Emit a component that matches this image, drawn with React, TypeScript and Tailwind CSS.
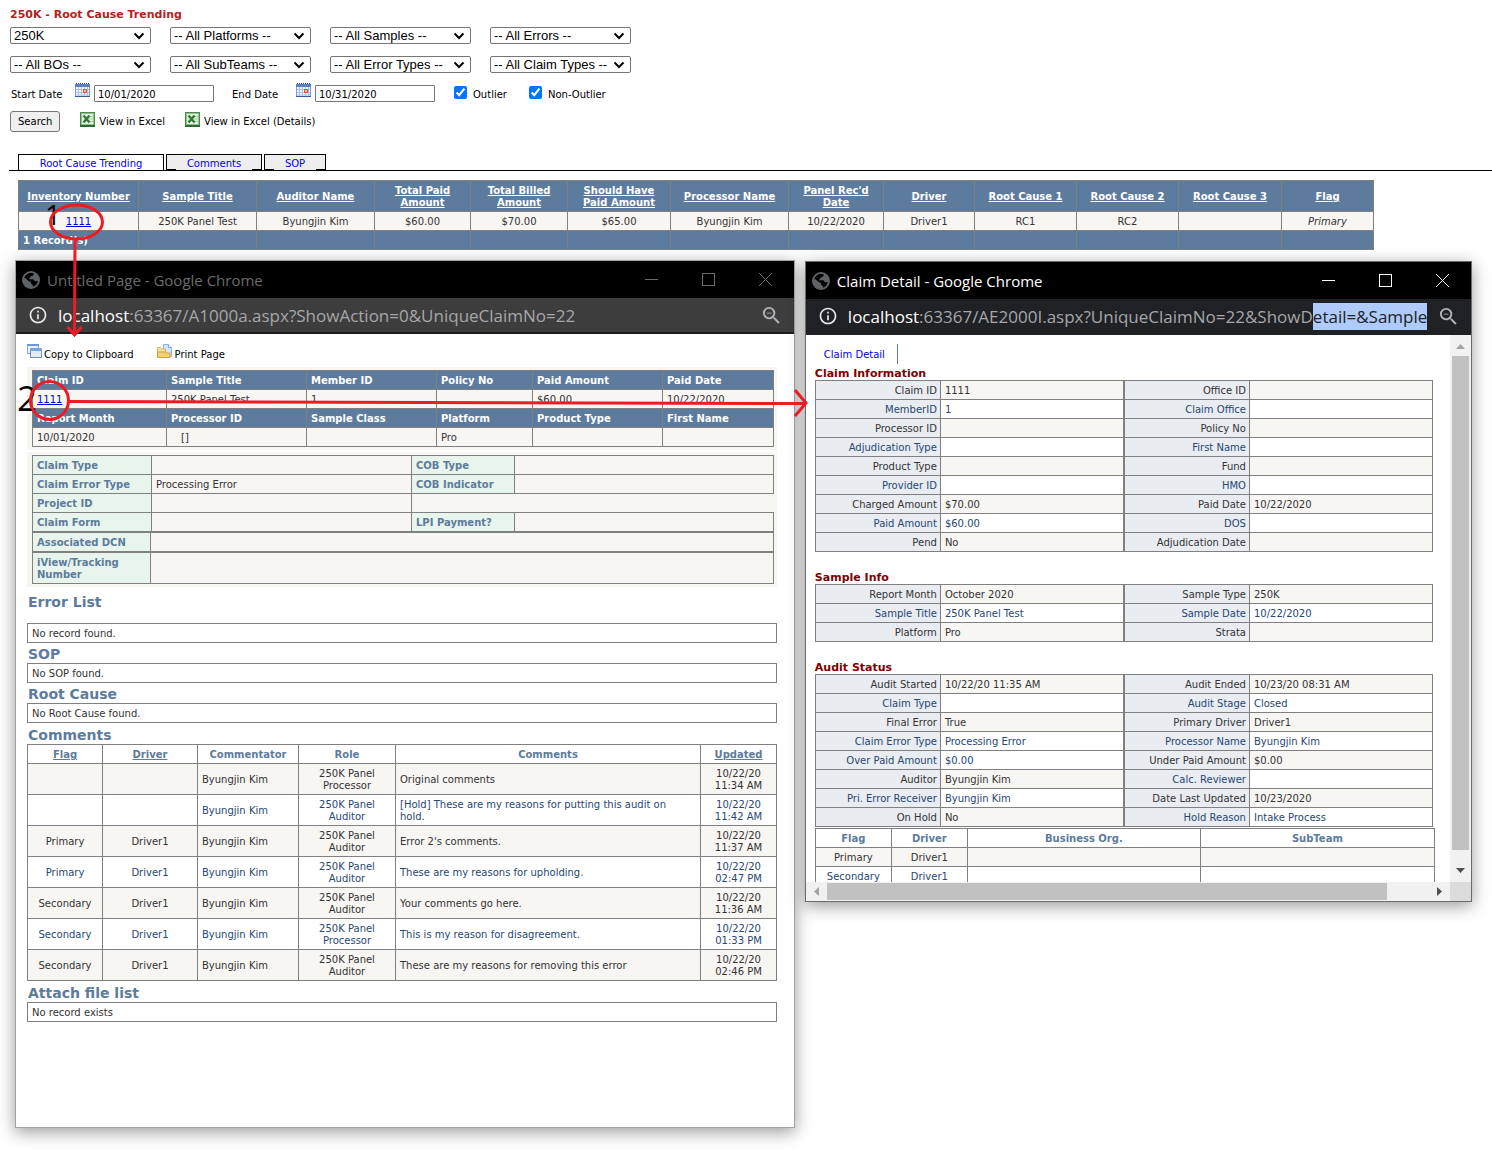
import React from "react";
import { MdInfoOutline, MdZoomOut } from "react-icons/md";

const filterRows = [
  ["250K", "-- All Platforms --", "-- All Samples --", "-- All Errors --"],
  ["-- All BOs --", "-- All SubTeams --", "-- All Error Types --", "-- All Claim Types --"],
];
const filterNames = [
  ["Audit", "Platform", "Sample", "Error"],
  ["Business org", "Sub team", "Error type", "Claim type"],
];

const trendingColumns = [
  { label: "Inventory Number", width: "w-[120px]" },
  { label: "Sample Title", width: "w-[118px]" },
  { label: "Auditor Name", width: "w-[118px]" },
  { label: "Total Paid Amount", width: "w-[96px]" },
  { label: "Total Billed Amount", width: "w-[97px]" },
  { label: "Should Have Paid Amount", width: "w-[103px]" },
  { label: "Processor Name", width: "w-[118px]" },
  { label: "Panel Rec'd Date", width: "w-[95px]" },
  { label: "Driver", width: "w-[91px]" },
  { label: "Root Cause 1", width: "w-[102px]" },
  { label: "Root Cause 2", width: "w-[102px]" },
  { label: "Root Cause 3", width: "w-[103px]" },
  { label: "Flag", width: "w-[92px]" },
];
const trendingRow = ["250K Panel Test", "Byungjin Kim", "$60.00", "$70.00", "$65.00", "Byungjin Kim", "10/22/2020", "Driver1", "RC1", "RC2", ""];

const comments = [
  ["", "", "250K Panel Processor", "Original comments", "10/22/20 11:34 AM"],
  ["", "", "250K Panel Auditor", "[Hold] These are my reasons for putting this audit on hold.", "10/22/20 11:42 AM"],
  ["Primary", "Driver1", "250K Panel Auditor", "Error 2's comments.", "10/22/20 11:37 AM"],
  ["Primary", "Driver1", "250K Panel Auditor", "These are my reasons for upholding.", "10/22/20 02:47 PM"],
  ["Secondary", "Driver1", "250K Panel Auditor", "Your comments go here.", "10/22/20 11:36 AM"],
  ["Secondary", "Driver1", "250K Panel Processor", "This is my reason for disagreement.", "10/22/20 01:33 PM"],
  ["Secondary", "Driver1", "250K Panel Auditor", "These are my reasons for removing this error", "10/22/20 02:46 PM"],
];

type Field = [label: string, value: string, plain?: boolean];

const claimLeft: Field[] = [
  ["Claim ID", "1111"],
  ["MemberID", "1", true],
  ["Processor ID", ""],
  ["Adjudication Type", "", true],
  ["Product Type", ""],
  ["Provider ID", "", true],
  ["Charged Amount", "$70.00"],
  ["Paid Amount", "$60.00", true],
  ["Pend", "No"],
];
const claimRight: Field[] = [
  ["Office ID", ""],
  ["Claim Office", "", true],
  ["Policy No", ""],
  ["First Name", "", true],
  ["Fund", ""],
  ["HMO", "", true],
  ["Paid Date", "10/22/2020"],
  ["DOS", "", true],
  ["Adjudication Date", ""],
];
const sampleLeft: Field[] = [
  ["Report Month", "October 2020"],
  ["Sample Title", "250K Panel Test", true],
  ["Platform", "Pro"],
];
const sampleRight: Field[] = [
  ["Sample Type", "250K"],
  ["Sample Date", "10/22/2020", true],
  ["Strata", ""],
];
const auditLeft: Field[] = [
  ["Audit Started", "10/22/20 11:35 AM"],
  ["Claim Type", "", true],
  ["Final Error", "True"],
  ["Claim Error Type", "Processing Error", true],
  ["Over Paid Amount", "$0.00", true],
  ["Auditor", "Byungjin Kim"],
  ["Pri. Error Receiver", "Byungjin Kim", true],
  ["On Hold", "No"],
];
const auditRight: Field[] = [
  ["Audit Ended", "10/23/20 08:31 AM"],
  ["Audit Stage", "Closed", true],
  ["Primary Driver", "Driver1"],
  ["Processor Name", "Byungjin Kim", true],
  ["Under Paid Amount", "$0.00"],
  ["Calc. Reviewer", "", true],
  ["Date Last Updated", "10/23/2020"],
  ["Hold Reason", "Intake Process", true],
];

const CalendarIcon = () => (
  <svg className="w-[15px] h-[15px] shrink-0" viewBox="0 0 15 15" aria-hidden="true">
    <rect x="0.5" y="2.5" width="14" height="11" fill="#f4f8ff" stroke="#7f9bd6" />
    <rect x="0" y="1" width="15" height="3" fill="#5b7fc4" />
    <path d="M1 .5h14" stroke="#444" strokeDasharray="1 1" />
    <path d="M3.5 4v9M6.5 4v9M9.5 4v9M12.5 4v9M1 6.5h13M1 9.5h13M1 12h13" stroke="#a9bfe8" />
    <rect x="8" y="6" width="4" height="4" fill="#e2502c" />
    <rect x="9" y="7" width="2" height="2" fill="#f6b9a6" />
    <path d="M0 13.5h15" stroke="#3c5b9c" />
  </svg>
);

const ExcelIcon = () => (
  <svg className="w-[15px] h-[15px] shrink-0" viewBox="0 0 15 15" aria-hidden="true">
    <rect width="15" height="15" fill="#4d8a50" />
    <rect y="13" width="15" height="2" fill="#2c6a32" />
    <rect x="1" y="1" width="13" height="12" fill="#8fc08a" />
    <rect x="2" y="2" width="11" height="10" fill="#e6f3e3" />
    <path d="M9 4.500h4M9 7h4M9 9.500h4" stroke="#a8cfa4" />
    <path d="M3.500 3.500l6 7M9.500 3.500l-6 7" stroke="#2f7a35" strokeWidth="2.400" />
  </svg>
);

const CopyIcon = () => (
  <svg className="w-[15px] h-[15px] shrink-0" viewBox="0 0 15 15" aria-hidden="true">
    <rect x="0.5" y="0.5" width="11" height="9" fill="#eaf2fc" stroke="#86a6da" />
    <rect x="0" y="0" width="12" height="2" fill="#6f97d6" />
    <rect x="3.500" y="4.500" width="11" height="9" fill="#e3edfa" stroke="#6d8fcb" />
    <rect x="3" y="4" width="12" height="3" fill="#7ba3de" />
  </svg>
);

const PrintIcon = () => (
  <svg className="w-[15px] h-[15px] shrink-0" viewBox="0 0 15 15" aria-hidden="true">
    <path d="M6.500 .5h5l3 3v9h-8z" fill="#d3e5fa" stroke="#8fb2e2" />
    <path d="M11.500 .5v3h3" fill="#fff" stroke="#7ea6dc" />
    <path d="M.5 3.500h3l1 1.500h4v8.500h-8z" fill="#f6e3a4" stroke="#d9b455" />
    <path d="M.5 13.500v-5.500h8l1 1h3.500v4.500z" fill="#f5d06e" stroke="#d2a23c" />
  </svg>
);

const GlobeIcon = () => (
  <svg className="mr-[7px] size-[18px] shrink-0" viewBox="0 0 18 18" aria-hidden="true">
    <circle cx="9" cy="9" r="9" fill="#5f6368" />
    <path d="M4.500 3.500C6 2 8.500 1.500 11.500 2.200c.8 1.600-.4 2.600-1.900 2.900-.9.200-.7 1.400-1.700 1.700-.9.300-1 1.300 0 1.500h3.100c1.200.1 1 1.700 2.200 1.900 1.100.1 2-.3 2.600-.1-.3 3-2.600 5.300-5 5.700.2-1.300.3-2-.8-2.300-1.200-.3-1.100-1.800-1-2.700-1.400-.2-2.600-.8-3.500-1.900C4.400 7.700 3.400 7 2.200 6.900 2.600 5.500 3.400 4.400 4.500 3.500z" fill="#000" />
  </svg>
);

function FilterSelect({ name, value }: { name: string; value: string }) {
  return (
    <div className="relative w-[141px]">
      <select
        aria-label={name}
        defaultValue={value}
        className="block w-full h-[17px] appearance-none rounded-[2px] border border-[#767676] bg-white pl-[3px] pr-4 text-[13px] leading-[15px] text-black font-['Liberation_Sans',Arial,sans-serif]"
      >
        <option>{value}</option>
      </select>
      <svg className="absolute right-[6px] top-[5px] w-[12px] h-[8px] pointer-events-none" viewBox="0 0 12 8" aria-hidden="true">
        <path d="M1.500 1.500L6 6l4.500-4.500" fill="none" stroke="#000" strokeWidth="2" />
      </svg>
    </div>
  );
}

function DateField({ id, label, value }: { id: string; label: string; value: string }) {
  return (
    <div className="flex items-center">
      <label htmlFor={id} className="w-16 pt-[2px]">{label}</label>
      <button type="button" aria-label={`Pick ${label}`} className="mb-[6px] mr-1">
        <CalendarIcon />
      </button>
      <input id={id} type="text" defaultValue={value} className="w-[120px] h-[17px] rounded-[1px] border border-[#767676] px-[3px] pt-px" />
    </div>
  );
}

function ChromeWindow({ title, active, url, className, children }: any) {
  return (
    <section className={`flex min-w-0 flex-col border bg-white shadow-[0_4px_16px_rgba(0,0,0,0.4)] ${className}`}>
      <header
        className={`flex h-[37px] shrink-0 items-center bg-black pl-[6px] text-[15px] leading-6 font-['Open_Sans','Noto_Sans',sans-serif] ${active ? "text-white" : "text-[#6b6b6b]"}`}
      >
        <GlobeIcon />
        <h2 className="flex-1 truncate">{title}</h2>
        <button type="button" aria-label="Minimize" className="flex h-full w-[57px] items-center justify-center">
          <svg className="size-[13px]" viewBox="0 0 13 13"><path d="M0 6.500h13" stroke="currentColor" /></svg>
        </button>
        <button type="button" aria-label="Maximize" className="flex h-full w-[57px] items-center justify-center">
          <svg className="size-[13px]" viewBox="0 0 13 13"><rect x="0.5" y="0.5" width="12" height="12" fill="none" stroke="currentColor" /></svg>
        </button>
        <button type="button" aria-label="Close" className="flex h-full w-[57px] items-center justify-center">
          <svg className="size-[13px]" viewBox="0 0 13 13"><path d="M0 0l13 13M13 0L0 13" stroke="currentColor" /></svg>
        </button>
      </header>
      <div
        className={`flex h-9 shrink-0 items-center border-b-2 pl-3 pr-[11px] text-[17px] leading-[27px] text-[#a5a7aa] font-['Open_Sans','Noto_Sans',sans-serif] ${active ? "bg-[#202124] border-[#202124]" : "bg-[#3d3d3d] border-[#1d1d1d]"}`}
      >
        <MdInfoOutline className="mr-[10px] size-5 shrink-0 text-[#e8eaed]" />
        <div className="min-w-0 flex-1 overflow-hidden whitespace-nowrap">{url}</div>
        <button type="button" aria-label="Zoom" className="ml-2 shrink-0 text-[#b0b3b8]">
          <MdZoomOut className="size-[23px]" />
        </button>
      </div>
      {children}
    </section>
  );
}

const grid = "w-full table-fixed border-collapse [&_td]:border [&_td]:border-[#808080] [&_td]:pt-1 [&_td]:pb-[2px] [&_th]:border [&_th]:border-[#808080] [&_th]:pt-1 [&_th]:pb-[2px]";

function TrendingTable() {
  return (
    <table className={`${grid} text-center text-[#333333]`}>
      <thead className="bg-[#5d7b9d] text-white">
        <tr>
          {trendingColumns.map((c) => (
            <th key={c.label} className={`${c.width} px-1`}>
              <a href="#" className="underline">{c.label}</a>
            </th>
          ))}
        </tr>
      </thead>
      <tbody>
        <tr className="bg-[#f7f6f3]">
          <td><a href="#" className="text-[#0000ee] underline">1111</a></td>
          {trendingRow.map((v, i) => <td key={i}>{v}</td>)}
          <td className="italic">Primary</td>
        </tr>
      </tbody>
      <tfoot className="bg-[#5d7b9d] text-left font-bold text-white">
        <tr>
          <td className="pl-1 whitespace-nowrap">1 Record(s)</td>
          {trendingColumns.slice(1).map((c) => <td key={c.label}></td>)}
        </tr>
      </tfoot>
    </table>
  );
}

function ClaimSummary() {
  return (
    <div className="bg-[#f7f6f3] pl-[5px] pr-[3px] py-[3px]">
      <table className={`${grid} text-left text-[#333333] [&_td]:px-1 [&_td]:h-[19px] [&_th]:px-1 [&_th]:bg-[#5d7b9d] [&_th]:text-white`}>
        <tbody>
          <tr>
            <th className="w-[134px]">Claim ID</th>
            <th className="w-[140px]">Sample Title</th>
            <th className="w-[130px]">Member ID</th>
            <th className="w-[96px]">Policy No</th>
            <th className="w-[130px]">Paid Amount</th>
            <th className="w-[111px]">Paid Date</th>
          </tr>
          <tr>
            <td><a href="#" className="text-[#0000ee] underline">1111</a></td>
            <td>250K Panel Test</td>
            <td>1</td>
            <td></td>
            <td>$60.00</td>
            <td>10/22/2020</td>
          </tr>
          <tr>
            <th>Report Month</th>
            <th>Processor ID</th>
            <th>Sample Class</th>
            <th>Platform</th>
            <th>Product Type</th>
            <th>First Name</th>
          </tr>
          <tr>
            <td>10/01/2020</td>
            <td><span className="pl-[10px]">[]</span></td>
            <td></td>
            <td>Pro</td>
            <td></td>
            <td></td>
          </tr>
        </tbody>
      </table>
    </div>
  );
}

function ClaimTypes() {
  const labels = "[&_th]:bg-[#e8f5ec] [&_th]:px-1 [&_th]:text-left [&_th]:text-[#5d7b9d] [&_td]:px-1";
  return (
    <div className="mt-[2px] bg-[#f7f6f3] pl-[5px] pr-[3px] py-[3px] text-[#333333]">
      <table className={`${grid} ${labels}`}>
        <tbody>
          <tr>
            <th className="w-[119px]">Claim Type</th>
            <td className="w-[260px]"></td>
            <th className="w-[103px]">COB Type</th>
            <td className="w-[259px]"></td>
          </tr>
          <tr>
            <th>Claim Error Type</th>
            <td>Processing Error</td>
            <th>COB Indicator</th>
            <td></td>
          </tr>
          <tr>
            <th>Project ID</th>
            <td></td>
          </tr>
          <tr>
            <th>Claim Form</th>
            <td></td>
            <th>LPI Payment?</th>
            <td></td>
          </tr>
        </tbody>
      </table>
      <table className={`${grid} ${labels}`}>
        <tbody>
          <tr>
            <th className="w-[118px]">Associated DCN</th>
            <td></td>
          </tr>
        </tbody>
      </table>
      <table className={`${grid} ${labels}`}>
        <tbody>
          <tr>
            <th className="w-[118px]">iView/Tracking Number</th>
            <td></td>
          </tr>
        </tbody>
      </table>
    </div>
  );
}

const SectionTitle = ({ children }: any) => (
  <h3 className="h-5 pl-px text-[14px] leading-[22px] font-bold text-[#5d7b9d]">{children}</h3>
);

const EmptyBox = ({ children }: any) => (
  <p className="border border-[#808080] bg-white pt-1 pb-[2px] px-1 text-[#333333]">{children}</p>
);

function CommentsTable() {
  return (
    <table className={`${grid} text-center [&_td]:px-1 [&_th]:px-1`}>
      <thead className="text-[#5d7b9d]">
        <tr>
          <th className="w-[75px]"><a href="#" className="underline">Flag</a></th>
          <th className="w-[95px]"><a href="#" className="underline">Driver</a></th>
          <th className="w-[101px]">Commentator</th>
          <th className="w-[97px]">Role</th>
          <th className="w-[305px]">Comments</th>
          <th className="w-[76px]"><a href="#" className="underline">Updated</a></th>
        </tr>
      </thead>
      <tbody>
        {comments.map(([flag, driver, role, text, updated], i) => (
          <tr key={i} className={i % 2 ? "bg-white text-[#284775]" : "bg-[#f7f6f3] text-[#333333]"}>
            <td>{flag}</td>
            <td>{driver}</td>
            <td className="text-left">Byungjin Kim</td>
            <td>{role}</td>
            <td className="text-left"><p className="pr-3">{text}</p></td>
            <td>{updated}</td>
          </tr>
        ))}
      </tbody>
    </table>
  );
}

function FieldTable({ fields }: { fields: Field[] }) {
  return (
    <table className={`${grid} flex-1 [&_td]:h-[19px]`}>
      <tbody>
        {fields.map(([label, value, plain]) => (
          <tr key={label} className={plain ? "bg-white text-[#284775]" : "bg-[#f7f6f3] text-[#333333]"}>
            <th className="w-[125px] bg-[#e9ecf1] pr-[3px] text-right font-normal">{label}</th>
            <td className="w-[183px] px-1">{value}</td>
          </tr>
        ))}
      </tbody>
    </table>
  );
}

function DetailSection({ title, left, right }: { title: string; left: Field[]; right: Field[] }) {
  return (
    <section>
      <h3 className="h-[14px] text-[11px] leading-4 font-bold text-[#800000]">{title}</h3>
      <div className="flex">
        <FieldTable fields={left} />
        <FieldTable fields={right} />
      </div>
    </section>
  );
}

function ClaimDetailBody() {
  return (
    <div className="grid grid-cols-[1fr_21px] grid-rows-[547px_19px]">
      <div className="overflow-hidden pl-[9px] pr-[17px] pt-[9px]">
        <nav className="mb-[2px] inline-flex h-5 items-center border-r border-[#5d7b9d] pl-[9px] pr-3 pt-[2px]">
          <a href="#" className="text-[#0000ee]">Claim Detail</a>
        </nav>
        <div className="flex flex-col gap-[18px]">
          <DetailSection title="Claim Information" left={claimLeft} right={claimRight} />
          <DetailSection title="Sample Info" left={sampleLeft} right={sampleRight} />
          <DetailSection title="Audit Status" left={auditLeft} right={auditRight} />
        </div>
        <table className={`${grid} mt-px text-center`}>
          <thead className="text-[#5d7b9d]">
            <tr>
              <th className="w-[76px]">Flag</th>
              <th className="w-[76px]">Driver</th>
              <th className="w-[233px]">Business Org.</th>
              <th className="w-[234px]">SubTeam</th>
            </tr>
          </thead>
          <tbody>
            <tr className="bg-[#f7f6f3] text-[#333333]">
              <td>Primary</td><td>Driver1</td><td></td><td></td>
            </tr>
            <tr className="text-[#284775]">
              <td>Secondary</td><td>Driver1</td><td></td><td></td>
            </tr>
          </tbody>
        </table>
      </div>
      <div className="flex flex-col items-center bg-[#f1f1f1] px-[2px]">
        <svg className="h-[21px] w-[9px] shrink-0" viewBox="0 0 9 21"><path d="M0 14h9L4.500 9z" fill="#a3a3a3" /></svg>
        <div className="w-full flex-1 bg-[#c1c1c1]"></div>
        <svg className="h-8 w-[9px] shrink-0" viewBox="0 0 9 32"><path d="M0 18h9l-4.500 5z" fill="#505050" /></svg>
      </div>
      <div className="flex items-center bg-[#f1f1f1] py-px">
        <svg className="h-[9px] w-[21px] shrink-0" viewBox="0 0 21 9"><path d="M13 0v9L8 4.500z" fill="#a3a3a3" /></svg>
        <div className="h-full flex-1 bg-[#c1c1c1]"></div>
        <svg className="h-[9px] w-[63px] shrink-0" viewBox="0 0 63 9"><path d="M50 0v9l5-4.500z" fill="#505050" /></svg>
      </div>
      <div className="bg-[#dcdcdc]"></div>
    </div>
  );
}

// hand-drawn callouts over the windows
function Annotations() {
  return (
    <div className="pointer-events-none absolute left-0 top-0 font-['Open_Sans','Noto_Sans',sans-serif] leading-none text-black">
      <span className="absolute left-[45px] top-[200px] text-[28px]">1</span>
      <span className="absolute left-[17px] top-[380px] text-[35px]">2</span>
      <svg className="absolute left-0 top-0 h-[430px] w-[820px] max-w-none" viewBox="0 0 820 430" fill="none" stroke="#ed1c24" strokeWidth="3" aria-hidden="true">
        <ellipse cx="76.500" cy="222" rx="26" ry="17" />
        <path d="M75 239L74.500 335M67.500 327l7 8l7-8" />
        <ellipse cx="49.500" cy="400.500" rx="19" ry="19" />
        <path d="M69 401.500L806 403.500M795 390l11 13l-11 13" />
      </svg>
    </div>
  );
}

export default function App() {
  return (
    <main className="relative bg-white pb-[22px] text-[10px] leading-[12px] text-black font-['DejaVu_Sans',Verdana,sans-serif]">
      <div className="pl-[10px] pt-2">
        <h1 className="text-[11px] leading-[14px] font-bold text-[#b22222]">250K - Root Cause Trending</h1>
        <div className="mt-[5px] flex flex-col gap-3">
          {filterRows.map((row, i) => (
            <div key={i} className="flex gap-[19px]">
              {row.map((value, j) => <FilterSelect key={value} name={filterNames[i][j]} value={value} />)}
            </div>
          ))}
        </div>
        <div className="mt-[9px] flex h-[23px] items-center">
          <div className="flex gap-[19px] pl-px">
            <DateField id="start-date" label="Start Date" value="10/01/2020" />
            <div className="-ml-px"><DateField id="end-date" label="End Date" value="10/31/2020" /></div>
          </div>
          <label className="ml-[19px] flex items-center gap-[6px] pt-[2px]">
            <input type="checkbox" defaultChecked className="mb-[5px] size-[13px]" />
            Outlier
          </label>
          <label className="ml-[22px] flex items-center gap-[6px] pt-[2px]">
            <input type="checkbox" defaultChecked className="mb-[5px] size-[13px]" />
            Non-Outlier
          </label>
        </div>
        <div className="mt-[6px] flex h-[21px] items-center">
          <button type="button" className="h-[21px] rounded-[3px] border border-[#767676] bg-[#efefef] px-[7px] pt-px">Search</button>
          <a href="#" className="ml-5 flex items-center gap-1 pt-px">
            <span className="mb-[6px]"><ExcelIcon /></span>View in Excel
          </a>
          <a href="#" className="ml-5 flex items-center gap-1 pt-px">
            <span className="mb-[6px]"><ExcelIcon /></span>View in Excel (Details)
          </a>
        </div>
      </div>

      <nav className="ml-[9px] mt-[22px] flex h-[17px] gap-[2px] border-b border-black pl-[9px] text-center text-[#0000ee]">
        <a href="#" className="w-[146px] border border-b-0 border-black pt-[3px]">Root Cause Trending</a>
        <a href="#" className="w-24 border border-black bg-[#eeeeee] px-[9px]">
          <span className="block bg-[#eeeeee] pt-[3px]">Comments</span>
        </a>
        <a href="#" className="w-[62px] border border-black bg-[#eeeeee] px-[9px]">
          <span className="block bg-[#eeeeee] pt-[3px]">SOP</span>
        </a>
      </nav>

      <div className="ml-[18px] mr-[118px] mt-[9px]">
        <TrendingTable />
      </div>

      <div className="mt-[10px] flex items-start gap-[10px] pl-[15px] pr-5">
        <ChromeWindow
          title="Untitled Page - Google Chrome"
          className="flex-[780] border-[#a3a3a3]"
          url={<><span className="text-white">localhost</span>:63367/A1000a.aspx?ShowAction=0&amp;UniqueClaimNo=22</>}
        >
          <div className="pl-[11px] pr-[17px] pt-[13px] pb-[105px]">
            <div className="mb-1 flex h-4 items-center gap-[23px]">
              <a href="#" className="flex items-center gap-[2px]">
                <span className="mb-2"><CopyIcon /></span>Copy to Clipboard
              </a>
              <a href="#" className="flex items-center gap-[3px]">
                <span className="mb-2"><PrintIcon /></span>Print Page
              </a>
            </div>
            <ClaimSummary />
            <ClaimTypes />
            <div className="mt-1 mb-3"><SectionTitle>Error List</SectionTitle></div>
            <EmptyBox>No record found.</EmptyBox>
            <SectionTitle>SOP</SectionTitle>
            <EmptyBox>No SOP found.</EmptyBox>
            <SectionTitle>Root Cause</SectionTitle>
            <EmptyBox>No Root Cause found.</EmptyBox>
            <div className="pt-px"><SectionTitle>Comments</SectionTitle></div>
            <CommentsTable />
            <div className="pt-px"><SectionTitle>Attach file list</SectionTitle></div>
            <EmptyBox>No record exists</EmptyBox>
          </div>
        </ChromeWindow>

        <ChromeWindow
          active
          title="Claim Detail - Google Chrome"
          className="mt-px flex-[667] border-[#6b6b6b]"
          url={
            <>
              <span className="text-white">localhost</span>:63367/AE2000I.aspx?UniqueClaimNo=22&amp;ShowD
              <span className="inline-block bg-[#aecbfa] text-[#202124]">etail=&amp;Sample</span>
            </>
          }
        >
          <ClaimDetailBody />
        </ChromeWindow>
      </div>

      <Annotations />
    </main>
  );
}
